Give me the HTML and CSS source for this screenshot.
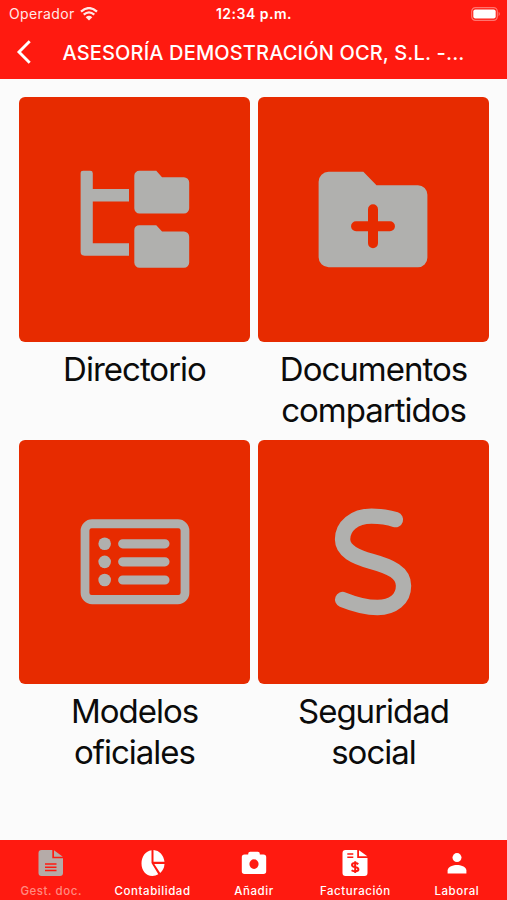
FILE: index.html
```html
<!DOCTYPE html>
<html lang="es">
<head>
<meta charset="utf-8">
<meta name="viewport" content="width=device-width, initial-scale=1">
<title>Gestión documental</title>
<link rel="stylesheet" href="styles.css">
</head>
<body>
<header class="header">
  <div class="status">
    <div class="carrier"><span>Operador</span>
      <svg class="wifi" viewBox="0 0 18 14"><path d="M1 4.600Q9-2.400 17 4.600M3.700 7.600Q9 3.100 14.300 7.600" fill="none" stroke="#fff" stroke-width="2.300"/><path d="M5.700 10.200Q9 7.400 12.300 10.200L9 13.600Z" fill="#fff"/></svg>
    </div>
    <span class="clock">12:34 p.m.</span>
    <svg class="battery" viewBox="0 0 30 14"><rect x=".7" y=".7" width="25.600" height="12.600" rx="3.700" fill="none" stroke="#fff" stroke-opacity=".4" stroke-width="1.200"/><rect x="2.300" y="2.400" width="22.400" height="9.200" rx="2" fill="#fff"/><path d="M27.700 4.800q2 2.200 0 4.400Z" fill="#fff" fill-opacity=".5"/></svg>
  </div>
  <div class="navbar">
    <svg class="back" viewBox="0 0 16 26"><path d="M13.700 2.300 3 13l10.700 10.700" fill="none" stroke="#fff" stroke-width="2.900"/></svg>
    <h1 class="title">ASESORÍA DEMOSTRACIÓN OCR, S.L. -...</h1>
  </div>
</header>
<main class="grid">
  <a class="card">
    <svg class="tile" viewBox="19 97 231 245"><path d="M83 171h7.200a2.500 2.500 0 0 1 2.500 2.500V189.300H129v12.400H92.700v41.900H129V256H84.500a4 4 0 0 1-4-4V173.500a2.500 2.500 0 0 1 2.500-2.500Z"/><path id="folder" d="M139.300 171h17l5.800 6.300H184a5.300 5.300 0 0 1 5.300 5.300v25.900a5.200 5.200 0 0 1-5.200 5.200H139.500a5.200 5.200 0 0 1-5.200-5.200V176a5 5 0 0 1 5-5Z"/><use href="#folder" y="54.400"/></svg>
    <span class="label">Directorio</span>
  </a>
  <a class="card">
    <svg class="tile" viewBox="258 97 231 245"><path d="M328.500 172H363.300L376.500 185.500H418a9.500 9.500 0 0 1 9.500 9.500v63a9.500 9.500 0 0 1-9.500 9.500H328.500a10 10 0 0 1-10-10V182a10 10 0 0 1 10-10Z"/><path class="cut" d="M356 226.500h34M373 209.500v34"/></svg>
    <span class="label">Documentos compartidos</span>
  </a>
  <a class="card">
    <svg class="tile" viewBox="19 439.500 231 245"><path fill-rule="evenodd" d="M92 519h86a11.500 11.500 0 0 1 11.500 11.500v62a11.500 11.500 0 0 1-11.500 11.500H92a11.500 11.500 0 0 1-11.500-11.500v-62A11.500 11.500 0 0 1 92 519ZM91.500 528a2.200 2.200 0 0 0-2.200 2.200V592.500a2.200 2.200 0 0 0 2.200 2.200h87a2.200 2.200 0 0 0 2.200-2.200V530.200a2.200 2.200 0 0 0-2.200-2.200Z"/><circle cx="104.600" cy="543.500" r="6.300"/><circle cx="104.600" cy="561.600" r="6.300"/><circle cx="104.600" cy="579.800" r="6.300"/><path class="line" d="M122.700 543.500h42.300M122.700 561.600h42.300M122.700 579.800h42.300"/></svg>
    <span class="label">Modelos oficiales</span>
  </a>
  <a class="card">
    <svg class="tile" viewBox="258 439.500 231 245"><path class="curve" d="M395.500 519.300C387 516.500 379 515.800 371.500 515.800C354 515.800 342.500 526 342.500 539C342.500 550.500 354.500 556.300 371 561C391 566.500 403.600 572.500 403.600 585.500C403.600 599 393 607.400 377.500 607.400C365 607.400 354 604 342.600 599.400"/></svg>
    <span class="label">Seguridad social</span>
  </a>
</main>
<nav class="tabs">
  <a class="tab active"><svg class="icon" viewBox="0 0 26 28"><path d="M3.500 1H14.300v8.300H25V24a3 3 0 0 1-3 3H3.500a3 3 0 0 1-3-3V4a3 3 0 0 1 3-3Z"/><path d="M16 1.200V7.700h8.800Z"/><path class="stroke" d="M7 14.900h11.500M7 18.200h11.500M7 21.500h11.500"/></svg><span>Gest. doc.</span></a>
  <a class="tab"><svg class="icon" viewBox="0 0 26 28"><path d="M11.500 1.200V14L18.300 25.200A13 13 0 0 1 12.500 27C5.500 27 1.500 21 1.500 14.500C1.500 7.500 5.500 2 11.500 1.200ZM13.500 1.100C19.500 1.700 23.500 6 24.500 12.700H13.500ZM14.300 15H24.500Q24.200 20.300 20.200 24Z"/></svg><span>Contabilidad</span></a>
  <a class="tab"><svg class="icon" viewBox="0 0 26 28"><path fill-rule="evenodd" d="M3.500 5.400H7.200V4.700a2 2 0 0 1 2-2H16.800a2 2 0 0 1 2 2V5.400H22.500a2.700 2.700 0 0 1 2.700 2.700V22.300a2.700 2.700 0 0 1-2.700 2.700H3.500a2.700 2.700 0 0 1-2.700-2.700V8.100a2.700 2.700 0 0 1 2.700-2.700ZM13 10.300a4.600 4.800 0 1 0 0 9.600a4.600 4.800 0 0 0 0-9.600Z"/></svg><span>Añadir</span></a>
  <a class="tab"><svg class="icon" viewBox="0 0 26 28"><path d="M3.500 1H15.200v8H25.500V24a3 3 0 0 1-3 3H3.500a3 3 0 0 1-3-3V4a3 3 0 0 1 3-3Z"/><path d="M17 1.200V7.300h8.300Z"/><path class="stroke" d="M5.300 5h6M5.300 8.300h6"/><path class="stroke bold" d="M16.300 15.100Q14.800 14 13 14Q10 14 10 16Q10 17.600 13.100 18.100Q16.400 18.700 16.400 20.500Q16.400 22.300 13.300 22.300Q11.200 22.300 9.600 21.200M13.200 12.300V24"/></svg><span>Facturación</span></a>
  <a class="tab"><svg class="icon" viewBox="0 0 26 28"><circle cx="13" cy="8.600" r="4.500"/><path d="M3.600 24.400V21.500C3.600 17.400 9.600 15.900 13 15.900S22.400 17.400 22.400 21.500V24.400Z"/></svg><span>Laboral</span></a>
</nav>
</body>
</html>
```
FILE: styles.css
```css
* { box-sizing: border-box; }
body {
  margin: 0;
  height: 900px;
  display: flex;
  flex-direction: column;
  overflow: hidden;
  background: #fbfbfb;
  color: #0b0b0b;
  font-family: Inter, "Liberation Sans", sans-serif;
}
svg { display: block; flex: none; }
.header { height: 79px; background: #ff1a10; color: #fff; }
.status {
  height: 27px;
  padding: 0 6px 0 9px;
  display: grid;
  grid-template-columns: 1fr auto 1fr;
  align-items: center;
  font-size: 14px;
}
.carrier { display: flex; align-items: center; gap: 5px; letter-spacing: .35px; opacity: .9; }
.wifi { width: 18px; height: 14px; }
.clock { font-size: 14px; font-weight: 600; letter-spacing: .5px; margin-right: 2px; }
.battery { width: 30px; height: 14px; justify-self: end; }
.navbar { height: 50px; display: flex; align-items: center; padding-left: 16px; }
.back { width: 16px; height: 26px; }
.title { margin: 1px 0 0 30.500px; font-size: 20px; font-weight: 500; letter-spacing: .15px; white-space: nowrap; }
.grid {
  flex: 1;
  padding: 18px 18px 0 19px;
  display: grid;
  grid-template-columns: 231px 231px;
  grid-template-rows: 342.500px 342.500px;
  gap: 0 8px;
}
.card { display: flex; flex-direction: column; align-items: center; }
.tile { width: 231px; height: 244.500px; border-radius: 6px; background: #e72b00; fill: #b0b0ae; }
.tile .cut { fill: none; stroke: #e72b00; stroke-width: 10; stroke-linecap: round; }
.tile .line { fill: none; stroke: #b0b0ae; stroke-width: 9.200; stroke-linecap: round; }
.tile .curve { fill: none; stroke: #b0b0ae; stroke-width: 15.400; stroke-linecap: round; }
.label { width: 200px; margin-top: 7px; font-size: 33px; line-height: 41px; letter-spacing: -1px; text-align: center; }
.tabs {
  height: 60px;
  display: grid;
  grid-template-columns: repeat(5, 1fr);
  background: #ff1a10;
  color: #fff;
}
.tab {
  display: flex;
  flex-direction: column;
  align-items: center;
  padding: 9px 0 0 1px;
  font-size: 11.500px;
  font-weight: 500;
  line-height: 14px;
  letter-spacing: .55px;
  white-space: nowrap;
}
.icon { width: 26px; height: 28px; margin-bottom: 7px; fill: #fff; }
.stroke { fill: none; stroke: #ff1a10; stroke-width: 1.500; }
.stroke.bold { stroke-width: 2; }
.active { color: #ff8a80; }
.active .icon { fill: #b5aba8; }
```
